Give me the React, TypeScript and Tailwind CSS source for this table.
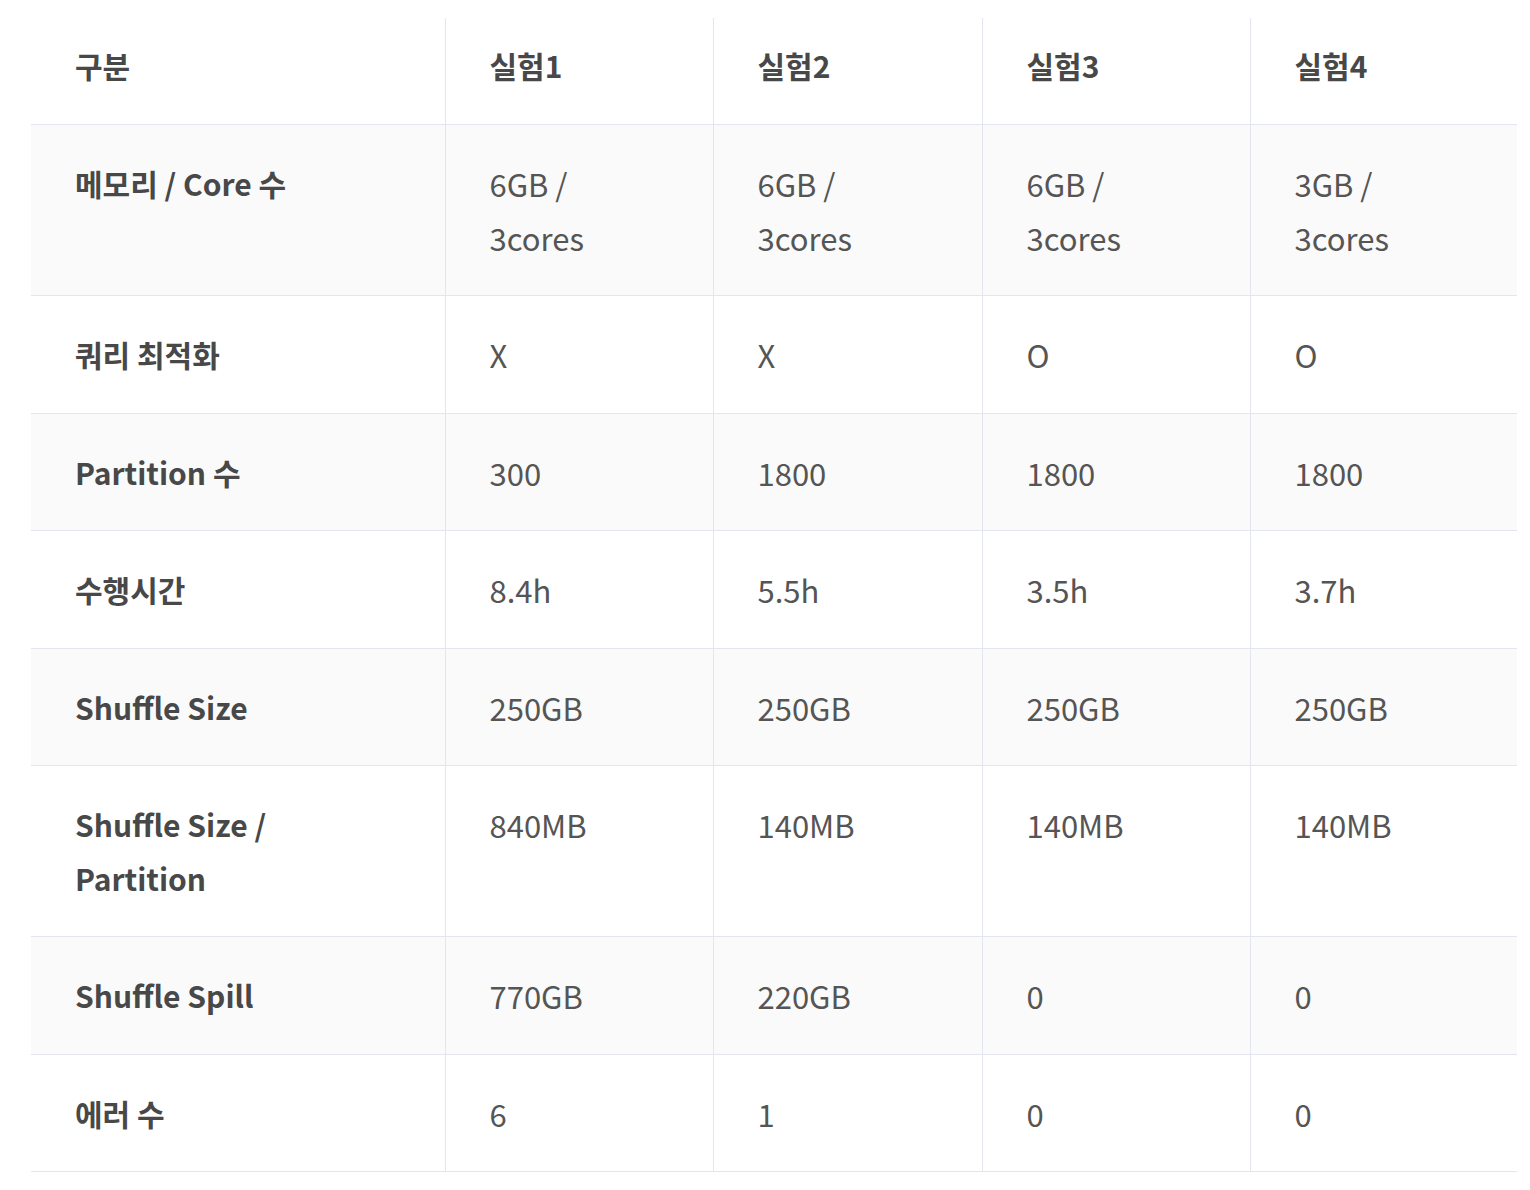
const header = ['구분', '실험1', '실험2', '실험3', '실험4']

const rows: string[][] = [
  ['메모리 / Core 수', '6GB / 3cores', '6GB / 3cores', '6GB / 3cores', '3GB / 3cores'],
  ['쿼리 최적화', 'X', 'X', 'O', 'O'],
  ['Partition 수', '300', '1800', '1800', '1800'],
  ['수행시간', '8.4h', '5.5h', '3.5h', '3.7h'],
  ['Shuffle Size', '250GB', '250GB', '250GB', '250GB'],
  ['Shuffle Size / Partition', '840MB', '140MB', '140MB', '140MB'],
  ['Shuffle Spill', '770GB', '220GB', '0', '0'],
  ['에러 수', '6', '1', '0', '0'],
]

export default function App() {
  return (
    <div
      className="min-h-screen bg-white pt-[18px] pl-[31px]"
      style={{ fontFamily: '"Noto Sans CJK KR", "Noto Sans", sans-serif' }}
    >
      <table className="w-[1486px] table-fixed border-collapse leading-[53.5px]">
        <colgroup>
          <col className="w-[414px]" />
          <col className="w-[268px]" />
          <col className="w-[269px]" />
          <col className="w-[268px]" />
          <col className="w-[267px]" />
        </colgroup>
        <thead>
          <tr className="border-b border-[#e3e5ef]">
            {header.map((h, i) => (
              <th
                key={h}
                className={
                  'pl-[44px] pr-[90px] pt-[21px] pb-[31.5px] text-left align-top text-[30px] font-bold text-[#484848]' +
                  (i > 0 ? ' border-l border-[#e3e5ef]' : '')
                }
              >
                {h}
              </th>
            ))}
          </tr>
        </thead>
        <tbody>
          {rows.map((r, ri) => (
            <tr
              key={r[0]}
              className={'border-b border-[#e3e5ef] ' + (ri % 2 === 0 ? 'bg-[#fafafa]' : 'bg-white')}
            >
              {r.map((c, ci) => (
                <td
                  key={ci}
                  className={
                    'pl-[44px] pr-[90px] pt-[32px] pb-[31px] align-top ' +
                    (ci === 0
                      ? 'text-[30px] font-bold text-[#484848]'
                      : 'border-l border-[#e3e5ef] text-[31px] font-normal text-[#555555]')
                  }
                >
                  {c}
                </td>
              ))}
            </tr>
          ))}
        </tbody>
      </table>
    </div>
  )
}
